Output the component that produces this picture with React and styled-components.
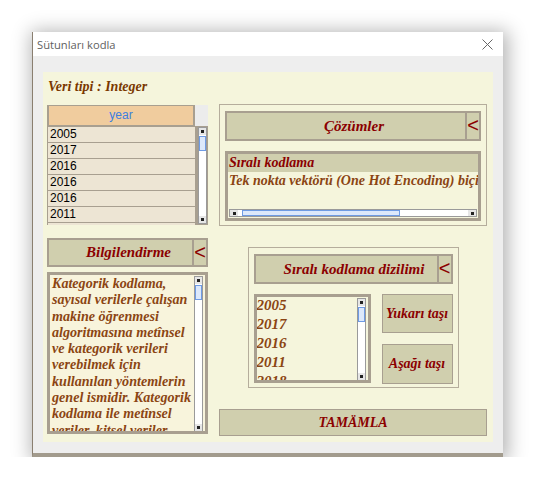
import React from "react";
import styled, { createGlobalStyle } from "styled-components";

const FRAME = "#a89f90";
const KHAKI = "#d0cfae";
const CREAM = "#f5f5dc";
const MAROON = "#8b0000";
const BROWN = "#8b4513";

const GlobalStyle = createGlobalStyle`
  body {
    margin: 0;
    background: #ffffff;
  }
`;

const Window = styled.div`
  margin: 32px 0 0 32px;
  width: 471px;
  height: 425px;
  box-sizing: border-box;
  background: #eeeeee;
  border-left: 1px solid #8a7f70;
  border-bottom: 4px solid #a29b8d;
  box-shadow: 2px 2px 18px 3px rgba(0, 0, 0, 0.3);
  display: flex;
  flex-direction: column;
`;

const TitleBar = styled.div`
  height: 24px;
  flex: none;
  background: #ffffff;
  display: flex;
  align-items: center;
  justify-content: space-between;
  padding: 0 10px 0 4px;
  font-family: "Open Sans", "Noto Sans", sans-serif;
  font-size: 11.2px;
  color: #5f5f5f;
`;

const Body = styled.div`
  flex: 1;
  padding: 16px 10px 11px 10px;
  display: flex;
`;

const Panel = styled.div`
  flex: 1;
  background: ${CREAM};
  padding: 0 6px 0 4px;
  font-family: "Liberation Serif", "Times New Roman", serif;
`;

const TypeLabel = styled.div`
  height: 32px;
  line-height: 30px;
  padding-left: 1px;
  font-size: 14px;
  font-weight: bold;
  font-style: italic;
  color: #7a3800;
`;

const Columns = styled.div`
  display: grid;
  grid-template-columns: 161px 268px;
  column-gap: 11px;
`;

const Column = styled.div`
  display: flex;
  flex-direction: column;
  align-items: ${(p) => (p.$center ? "center" : "stretch")};
`;

/* ---------- table ---------- */

const Table = styled.div`
  margin-top: 1px;
  height: 120px;
  box-sizing: border-box;
  background: ${FRAME};
  border-left: 1px solid ${FRAME};
  display: grid;
  grid-template-columns: 147px 13px;
  grid-template-rows: 21px 1fr;
  overflow: hidden;
`;

const HeadCell = styled.div`
  background: #f0cc9e;
  border: 1px solid ${FRAME};
  border-right-width: 2px;
  color: #3d7ee0;
  font-family: "Liberation Sans", Arial, sans-serif;
  font-size: 12px;
  text-align: center;
  line-height: 19px;
`;

const Corner = styled.div`
  background: #ececec;
`;

const Rows = styled.div`
  overflow: hidden;
  padding-top: 1px;
`;

const Row = styled.div`
  height: 15px;
  margin-bottom: 1px;
  background: #ede5d4;
  font-family: "Liberation Sans", Arial, sans-serif;
  font-size: 12px;
  line-height: 15px;
  padding-left: 2px;
  color: #000;
`;

const ScrollCol = styled.div`
  display: flex;
  justify-content: center;
  padding: 1px 2px 2px 3px;
`;

/* ---------- scrollbar ---------- */

const VBar = styled.div`
  width: 7px;
  height: ${(p) => p.$h}px;
  background: #ffffff;
  border: 1px solid #9a9a9a;
  display: flex;
  flex-direction: column;
  justify-content: space-between;
  position: relative;
`;

const HBar = styled.div`
  height: 6px;
  background: #ffffff;
  border: 1px solid #9a9a9a;
  display: flex;
  align-items: center;
  justify-content: space-between;
  position: relative;
`;

const Arrow = styled.div`
  width: ${(p) => (p.$h ? "8px" : "7px")};
  height: ${(p) => (p.$h ? "6px" : "7px")};
  background: #e6e6e6;
  display: flex;
  align-items: center;
  justify-content: center;
  &::after {
    content: "";
    width: 3px;
    height: 3px;
    background: #222;
  }
`;

const Thumb = styled.div`
  position: absolute;
  background: #dce8fb;
  border: 1px solid #6e9be4;
  box-sizing: border-box;
  ${(p) =>
    p.$h
      ? `top: 0; bottom: 0; left: ${p.$from}px; width: ${p.$len}px;`
      : `left: 0; right: 0; top: ${p.$from}px; height: ${p.$len}px;`}
`;

const VScroll = ({ h }) => (
  <VBar $h={h}>
    <Arrow />
    <Thumb $from={8} $len={15} />
    <Arrow />
  </VBar>
);

const HScroll = () => (
  <HBar>
    <Arrow $h />
    <Thumb $h $from={12} $len={158} />
    <Arrow $h />
  </HBar>
);

/* ---------- headers ---------- */

const Header = styled.div`
  height: ${(p) => p.$h}px;
  box-sizing: border-box;
  border: 2px solid ${FRAME};
  background: ${KHAKI};
  display: grid;
  grid-template-columns: 1fr 14px;
`;

const HeaderTitle = styled.div`
  display: flex;
  align-items: center;
  justify-content: center;
  padding-left: 16px;
  font-size: 15px;
  font-weight: bold;
  font-style: italic;
  color: ${MAROON};
  white-space: nowrap;
`;

const Collapse = styled.div`
  border-left: 2px solid ${FRAME};
  display: flex;
  align-items: center;
  justify-content: center;
  font-family: "Liberation Sans", Arial, sans-serif;
  font-size: 20px;
  line-height: 1;
  color: ${MAROON};
  padding-bottom: 2px;
`;

const PanelHeader = ({ title, h = 30 }) => (
  <Header $h={h}>
    <HeaderTitle>{title}</HeaderTitle>
    <Collapse>&lt;</Collapse>
  </Header>
);

/* ---------- info box ---------- */

const InfoBox = styled.div`
  margin-top: 5px;
  height: 162px;
  box-sizing: border-box;
  border: 3px solid ${FRAME};
  background: #f8f4dc;
  display: flex;
  overflow: hidden;
`;

const InfoText = styled.div`
  flex: 1;
  padding: 0 0 0 2px;
  font-size: 14.1px;
  line-height: 16.3px;
  font-weight: bold;
  font-style: italic;
  color: ${BROWN};
  white-space: nowrap;
  overflow: hidden;
`;

const InfoScroll = styled.div`
  width: 11px;
  padding: 1px 0 1px 1px;
`;

/* ---------- group boxes ---------- */

const Group = styled.div`
  width: ${(p) => p.$w}px;
  height: ${(p) => p.$h}px;
  box-sizing: border-box;
  border: 1px solid #b5ad9c;
  padding: 6px 5px 0 5px;
  display: flex;
  flex-direction: column;
`;

const SolutionList = styled.div`
  margin-top: 10px;
  height: 70px;
  box-sizing: border-box;
  border: 3px solid ${FRAME};
  background: ${CREAM};
  display: flex;
  flex-direction: column;
  overflow: hidden;
`;

const Option = styled.div`
  height: 18px;
  line-height: 18px;
  padding-left: 1px;
  font-size: 14px;
  font-weight: bold;
  font-style: italic;
  white-space: nowrap;
  overflow: hidden;
  background: ${(p) => (p.$selected ? KHAKI : "transparent")};
  color: ${(p) => (p.$selected ? MAROON : BROWN)};
`;

const ListFill = styled.div`
  flex: 1;
`;

const HScrollWrap = styled.div`
  padding: 0 1px 1px 1px;
`;

const OrderRow = styled.div`
  margin-top: 10px;
  display: flex;
  justify-content: space-between;
`;

const OrderList = styled.div`
  width: 117px;
  height: 89px;
  box-sizing: border-box;
  border: 3px solid ${FRAME};
  background: ${CREAM};
  display: flex;
  overflow: hidden;
`;

const OrderItems = styled.div`
  flex: 1;
  margin-top: -1px;
  font-size: 15px;
  line-height: 19px;
  font-weight: bold;
  font-style: italic;
  color: ${BROWN};
  overflow: hidden;
`;

const OrderScroll = styled.div`
  width: 11px;
  padding: 1px 0 0 0;
`;

const ButtonStack = styled.div`
  display: flex;
  flex-direction: column;
  gap: 11px;
`;

const Button = styled.button`
  width: ${(p) => p.$w || 71}px;
  height: ${(p) => p.$h || 39}px;
  margin: 0;
  padding: 0;
  background: ${KHAKI};
  border: 1px solid ${FRAME};
  font-family: "Liberation Serif", "Times New Roman", serif;
  font-size: 14px;
  font-weight: bold;
  font-style: italic;
  color: ${MAROON};
`;

const Finish = styled(Button)`
  margin-top: 21px;
  width: 268px;
  height: 27px;
  font-size: 14px;
`;

const CloseIcon = () => (
  <svg width="11" height="11" viewBox="0 0 11 11">
    <path d="M0.5 0.5 L10.5 10.5 M10.5 0.5 L0.5 10.5" stroke="#666" strokeWidth="1" />
  </svg>
);

const infoLines = [
  "Kategorik kodlama,",
  "sayısal verilerle çalışan",
  "makine öğrenmesi",
  "algoritmasına metînsel",
  "ve kategorik verileri",
  "verebilmek için",
  "kullanılan yöntemlerin",
  "genel ismidir. Kategorik",
  "kodlama ile metînsel",
  "veriler, kitsel veriler",
];

const years = ["2005", "2017", "2016", "2016", "2016", "2011", "2018"];
const order = ["2005", "2017", "2016", "2011", "2018"];

export default function App() {
  return (
    <>
      <GlobalStyle />
      <Window>
        <TitleBar>
          <span>Sütunları kodla</span>
          <CloseIcon />
        </TitleBar>
        <Body>
          <Panel>
            <TypeLabel>Veri tipi : Integer</TypeLabel>
            <Columns>
              <Column>
                <Table>
                  <HeadCell>year</HeadCell>
                  <Corner />
                  <Rows>
                    {years.map((y, i) => (
                      <Row key={i}>{y}</Row>
                    ))}
                  </Rows>
                  <ScrollCol>
                    <VScroll h={95} />
                  </ScrollCol>
                </Table>
                <div style={{ height: 13 }} />
                <PanelHeader title="Bilgilendirme" h={29} />
                <InfoBox>
                  <InfoText>
                    {infoLines.map((l, i) => (
                      <div key={i}>{l}</div>
                    ))}
                  </InfoText>
                  <InfoScroll>
                    <VScroll h={154} />
                  </InfoScroll>
                </InfoBox>
              </Column>
              <Column $center>
                <Group $w={268} $h={122}>
                  <PanelHeader title="Çözümler" />
                  <SolutionList>
                    <Option $selected>Sıralı kodlama</Option>
                    <Option>Tek nokta vektörü (One Hot Encoding) biçimi</Option>
                    <ListFill />
                    <HScrollWrap>
                      <HScroll />
                    </HScrollWrap>
                  </SolutionList>
                </Group>
                <div style={{ height: 21 }} />
                <Group $w={211} $h={141}>
                  <PanelHeader title="Sıralı kodlama dizilimi" />
                  <OrderRow>
                    <OrderList>
                      <OrderItems>
                        {order.map((y, i) => (
                          <div key={i}>{y}</div>
                        ))}
                      </OrderItems>
                      <OrderScroll>
                        <VScroll h={81} />
                      </OrderScroll>
                    </OrderList>
                    <ButtonStack>
                      <Button>Yukarı taşı</Button>
                      <Button $h={40}>Aşağı taşı</Button>
                    </ButtonStack>
                  </OrderRow>
                </Group>
                <Finish>TAMÄMLA</Finish>
              </Column>
            </Columns>
          </Panel>
        </Body>
      </Window>
    </>
  );
}
